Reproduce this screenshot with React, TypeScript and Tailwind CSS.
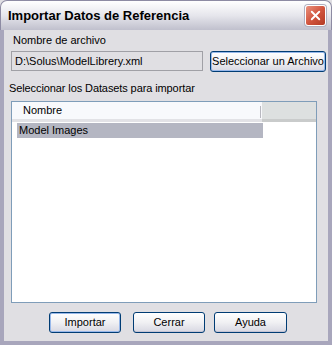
import { X } from 'lucide-react';

const font = { fontFamily: '"Liberation Sans", Arial, sans-serif' };

const XpButton = ({ label, focused, className }: { label: string; focused?: boolean; className: string }) => (
    <button
        className={`${className} rounded-[3px] border border-[#003c74] bg-gradient-to-b from-white via-[#f0f0f3] to-[#d8d8e2] text-[11px] text-black ${focused ? 'shadow-[inset_0_0_0_1px_#98b8ea]' : 'shadow-[inset_0_-1px_0_#c4c4d4]'}`}
    >
        {label}
    </button>
);

const App = () => {
    return (
        <div className="w-[332px] h-[345px] flex flex-col bg-[#e0dfe3] select-none" style={font}>
            {/* Title bar */}
            <div className="h-[30px] shrink-0 flex items-center justify-between pl-[7px] pr-[5px] rounded-t-[7px] border border-b-0 border-[#8d8ba3] bg-gradient-to-b from-white via-[#e6e6ec] to-[#c0c0cd]">
                <span className="text-[13px] font-bold text-black mt-[1px]">Importar Datos de Referencia</span>
                <div className="w-[21px] h-[21px] rounded-[3px] border border-white bg-gradient-to-br from-[#e8907c] via-[#d2553f] to-[#b33a24] flex items-center justify-center shadow-[0_0_0_1px_#b0b0c0]">
                    <X className="w-[15px] h-[15px] text-white" strokeWidth={3} />
                </div>
            </div>

            {/* Body */}
            <div className="flex-1 flex flex-col border-l-[4px] border-r-[4px] border-b-[4px] border-[#a8a6bc] pl-[7px] pr-[2px]">
                <div className="text-[11px] leading-[13px] text-black mt-[4px] ml-[2px]">Nombre de archivo</div>

                <div className="flex items-start mt-[4px] gap-[7px]">
                    <div className="w-[192px] h-[20px] border border-[#a0a0a6] bg-[#e0dfe3] flex items-center pl-[3px] text-[11px] text-black">
                        D:\Solus\ModelLibrery.xml
                    </div>
                    <XpButton label="Seleccionar un Archivo" focused className="w-[116px] h-[21px]" />
                </div>

                <div className="text-[11px] leading-[13px] text-black mt-[10px] ml-[-2px] tracking-[-0.1px]">Seleccionar los Datasets para importar</div>

                {/* List view */}
                <div className="w-[306px] h-[202px] mt-[6px] border border-[#7f9db9] bg-white flex flex-col">
                    <div className="h-[20px] flex shrink-0">
                        <div className="w-[250px] flex items-center pl-[11px] bg-[#f8f9fc] border-b-[3px] border-[#e2e2e6] relative text-[11px] text-black">
                            Nombre
                            <div className="absolute right-[1px] top-[4px] w-[1px] h-[12px] bg-[#b8b8c0]" />
                        </div>
                        <div className="flex-1 bg-[#dde0e0] border-b-[3px] border-[#c9cbcb]" />
                    </div>
                    <div className="ml-[5px] mt-[1px] w-[246px] h-[15px] bg-[#b4b6c2] flex items-center pl-[2px] text-[11px] text-black">
                        Model Images
                    </div>
                </div>

                <div className="flex mt-[9px] ml-[38px]">
                    <XpButton label="Importar" focused className="w-[72px] h-[21px]" />
                    <XpButton label="Cerrar" className="w-[72px] h-[21px] ml-[12px]" />
                    <XpButton label="Ayuda" className="w-[73px] h-[21px] ml-[9px]" />
                </div>
            </div>
        </div>
    );
};

export default App;
